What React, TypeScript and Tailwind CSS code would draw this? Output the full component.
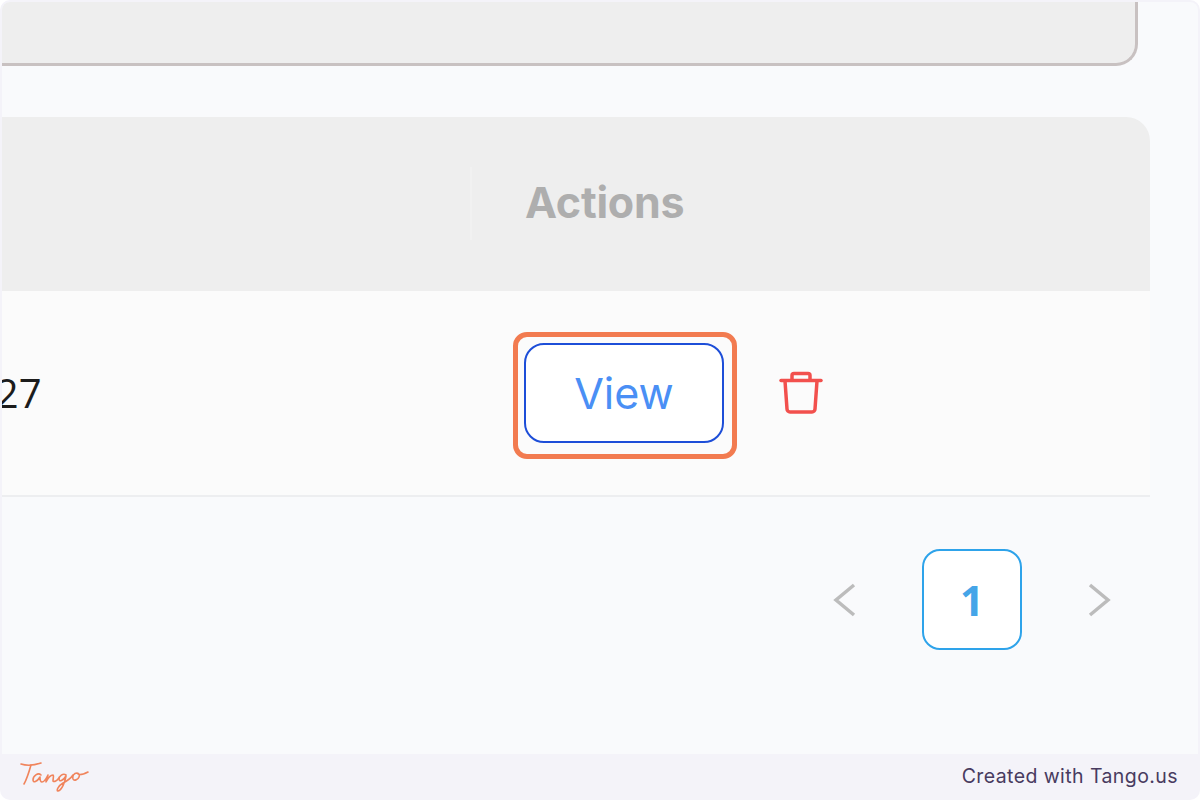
export default function App() {
  return (
    <div className="h-[800px] w-[1200px] overflow-hidden bg-white font-['Inter',sans-serif]">
      <div className="flex h-full w-full flex-col rounded-[10px] bg-[#f4f3f9] px-[2px] pt-[2px]">
        <main className="relative flex h-[752px] flex-col overflow-hidden rounded-t-[8px] bg-[#f9fafc]">
          <div className="h-[64px] w-[1136px] rounded-br-[22px] border-r-[3px] border-b-[3px] border-[#c8c1c1] bg-[#eeeeee]" />
          <section className="mt-[51px] w-[1148px]">
            <div className="flex h-[174px] rounded-tr-[24px] bg-[#eeeeee] pl-[468px]">
              <div className="mt-[50px] h-[73px] w-[2px] bg-[#f1f1f1]" />
              <div className="pt-[61px] pl-[53px] text-[43px] leading-[48px] font-bold tracking-[-0.25px] text-[#aeaeae]">Actions</div>
            </div>
            <div className="relative flex h-[206px] items-center border-b-2 border-[#edeef0] bg-[#fbfbfb]">
              <span className="w-[522px] font-['Open_Sans',sans-serif] text-[40px] leading-none text-[#1c1c1c] [text-indent:-29px]">127</span>
              <button className="flex h-[100px] w-[200px] items-center justify-center rounded-[20px] border-[2.5px] border-[#1d4ed8] bg-white text-[43px] leading-none text-[#4a8ff5]">View</button>
              <svg className="ml-[55px]" width="44" height="46" viewBox="0 0 44 46" fill="none" stroke="#f2504d" strokeWidth="3.5" strokeLinejoin="round" strokeLinecap="round">
                <path d="M2 10.5h40" />
                <path d="M13 10V5.5a2 2 0 0 1 2-2h14a2 2 0 0 1 2 2V10" />
                <path d="M6 11l2 28a3 3 0 0 0 3 3h22a3 3 0 0 0 3-3l2-28" />
              </svg>
              <div className="absolute top-[41px] left-[511px] h-[127px] w-[224px] rounded-[14px] border-[5px] border-[#f27b50]" />
            </div>
          </section>
          <nav className="mt-[52px] flex w-[1110px] items-center justify-end">
            <svg width="26" height="36" viewBox="0 0 26 36" fill="none" stroke="#bcbcbc" strokeWidth="3.5">
              <path d="M22 3L4 18l18 15" />
            </svg>
            <div className="mr-[64px] ml-[64px] flex h-[101px] w-[100px] items-center justify-center rounded-[18px] border-[2.5px] border-[#2ea3ea] bg-white font-['Open_Sans',sans-serif] text-[42px] leading-none font-bold text-[#45a5e8]">1</div>
            <svg width="26" height="36" viewBox="0 0 26 36" fill="none" stroke="#bcbcbc" strokeWidth="3.5">
              <path d="M4 3l18 15L4 33" />
            </svg>
          </nav>
        </main>
        <footer className="flex flex-1 items-center justify-between pr-[20px] pl-[18px]">
          <svg width="70" height="36" viewBox="0 0 70 36" fill="none" stroke="#f0845c" strokeWidth="1.6" strokeLinecap="round" strokeLinejoin="round">
            <path d="M1 5c6 2 14 1 20-1" />
            <path d="M11 6C9 13 7 20 4 25" />
            <path d="M21 16c-3-3-8 1-8 5 0 3 4 2 7-3 0 3 0 5 2 5s4-3 6-7c-1 3-2 6-2 7 2-4 5-7 7-7 1 0 0 4 0 6 0 1 3 1 6-3" />
            <path d="M46 16c-3-2-7 1-7 4 0 3 4 2 7-3-1 6-4 14-8 15-2 0 0-5 5-8 4-2 8-5 10-8" />
            <path d="M57 14c-3 0-5 3-4 6 1 2 5 1 6-2 1-2 0-4-2-4 1 2 5 2 11-1" />
          </svg>
          <span className="text-[19.5px] leading-none tracking-[0.42px] text-[#483b60]">Created with Tango.us</span>
        </footer>
      </div>
    </div>
  );
}
